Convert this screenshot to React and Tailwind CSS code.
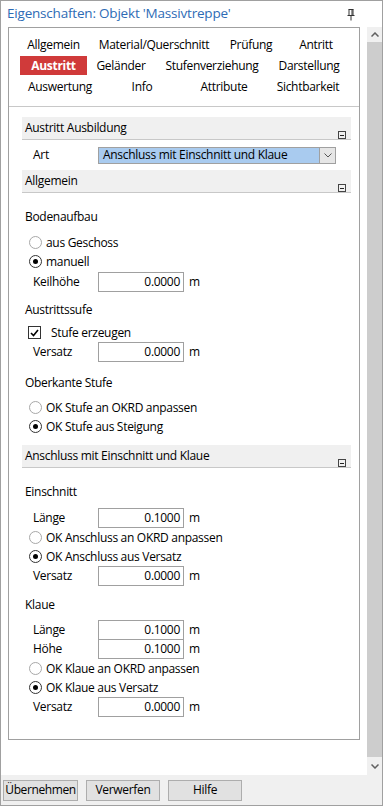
import React from "react";

const font = { fontFamily: '"Open Sans", "Noto Sans", sans-serif' };

function Radio({ checked, label }) {
  return (
    <div className="flex h-[19px] items-center pl-[7px]">
      <span
        className={
          "flex h-[13px] w-[13px] items-center justify-center rounded-full border bg-white " +
          (checked ? "border-[#333333]" : "border-[#a8a8a8]")
        }
      >
        {checked && <span className="h-[5px] w-[5px] rounded-full bg-black" />}
      </span>
      <span className="ml-[4px]">{label}</span>
    </div>
  );
}

function InputRow({ label, value, className = "" }) {
  return (
    <div className={"flex h-[20px] items-center " + className}>
      <span className="w-[76px] pl-[11px]">{label}</span>
      <div className="flex h-[20px] w-[86px] items-center justify-end border border-[#a0a0a0] bg-white pr-[3px]">
        {value}
      </div>
      <span className="ml-[5px]">m</span>
    </div>
  );
}

function Label({ children, className = "" }) {
  return <div className={"flex h-[20px] items-center pl-[3px] " + className}>{children}</div>;
}

function Header({ children, className = "" }) {
  return (
    <div className={"relative h-[23px] border-b border-[#c8c8c8] bg-[#f0f0f0] pl-[3px] " + className}>
      <div className="flex h-[22px] items-center">{children}</div>
      <div className="absolute right-[5px] top-[14px] flex h-[8px] w-[8px] items-center justify-center border border-[#444]">
        <div className="h-[1px] w-[4px] bg-[#222]" />
      </div>
    </div>
  );
}

function Tab({ w, children, active }) {
  return (
    <div className={"flex h-[21px] items-center justify-center " + w}>
      {active ? (
        <div className="flex h-[19px] w-full items-center justify-center bg-[#d03a3a] font-bold text-white">
          {children}
        </div>
      ) : (
        children
      )}
    </div>
  );
}

export default function App() {
  return (
    <div
      className="flex h-[806px] w-[383px] flex-col border border-[#a0a0a0] bg-white text-[12px] leading-none tracking-[-0.3px] text-black"
      style={font}
    >
      {/* title */}
      <div className="relative flex h-[26px] shrink-0 items-center pl-[6px]">
        <span className="text-[13.5px] tracking-[-0.2px] text-[#2e6bb5]">Eigenschaften: Objekt 'Massivtreppe'</span>
        <svg className="absolute right-[27px] top-[8px]" width="8" height="12" viewBox="0 0 8 12">
          <path d="M1.5 0.5h5M2 0.5v6M6 0.5v6M5 0.5v6M0.5 6.5h7M4 6.5v5" stroke="#333" strokeWidth="1" fill="none" />
        </svg>
      </div>

      <div className="flex min-h-0 flex-1">
        {/* content area */}
        <div className="flex-1 pl-[7px] pr-[7px]">
          <div className="h-[713px] border border-[#a0a0a0] bg-white">
            {/* tabs */}
            <div className="border-b border-[#c8c8c8] pb-[9px] pl-[11px] pt-[6px]">
              <div className="flex">
                <Tab w="w-[67px]">Allgemein</Tab>
                <Tab w="w-[134px]">Material/Querschnitt</Tab>
                <Tab w="w-[60px]">Prüfung</Tab>
                <Tab w="w-[70px]">Antritt</Tab>
              </div>
              <div className="flex">
                <Tab w="w-[67px]" active>
                  Austritt
                </Tab>
                <Tab w="w-[68px]">Geländer</Tab>
                <Tab w="w-[114px]">Stufenverziehung</Tab>
                <Tab w="w-[80px]">Darstellung</Tab>
              </div>
              <div className="flex">
                <Tab w="w-[80px]">Auswertung</Tab>
                <Tab w="w-[84px]">Info</Tab>
                <Tab w="w-[80px]">Attribute</Tab>
                <Tab w="w-[88px]">Sichtbarkeit</Tab>
              </div>
            </div>

            <div className="ml-[13px] mr-[8px] mt-[10px]">
              <Header>Austritt Ausbildung</Header>
              <div className="flex h-[30px] items-center">
                <span className="w-[76px] pl-[11px]">Art</span>
                <div className="flex h-[17px] w-[238px] items-center border border-[#a0a0a0] bg-[#a9cbef]">
                  <span className="flex-1 pl-[4px]">Anschluss mit Einschnitt und Klaue</span>
                  <div className="flex h-full w-[16px] items-center justify-center border-l border-[#a0a0a0] bg-[#e6e6e6]">
                    <svg width="8" height="5" viewBox="0 0 8 5">
                      <path d="M0.5 0.5L4 4L7.5 0.5" stroke="#555" strokeWidth="1" fill="none" />
                    </svg>
                  </div>
                </div>
              </div>
              <Header>Allgemein</Header>

              <Label className="mt-[14px]">Bodenaufbau</Label>
              <div className="mt-[6px]">
                <Radio label="aus Geschoss" />
                <Radio checked label="manuell" />
              </div>
              <InputRow label="Keilhöhe" value="0.0000" className="mt-[1px]" />

              <Label className="mt-[8px]">Austrittssufe</Label>
              <div className="mt-[3px] flex h-[19px] items-center pl-[6px]">
                <span className="flex h-[13px] w-[13px] items-center justify-center border border-[#333] bg-white">
                  <svg width="9" height="8" viewBox="0 0 9 8">
                    <path d="M1 4L3.5 6.5L8 1" stroke="#000" strokeWidth="1.6" fill="none" />
                  </svg>
                </span>
                <span className="ml-[10px]">Stufe erzeugen</span>
              </div>
              <InputRow label="Versatz" value="0.0000" />

              <Label className="mt-[11px]">Oberkante Stufe</Label>
              <div className="mt-[5px]">
                <Radio label="OK Stufe an OKRD anpassen" />
                <Radio checked label="OK Stufe aus Steigung" />
              </div>

              <Header className="mt-[9px]">Anschluss mit Einschnitt und Klaue</Header>

              <Label className="mt-[14px]">Einschnitt</Label>
              <InputRow label="Länge" value="0.1000" className="mt-[6px]" />
              <Radio label="OK Anschluss an OKRD anpassen" />
              <Radio checked label="OK Anschluss aus Versatz" />
              <InputRow label="Versatz" value="0.0000" />

              <Label className="mt-[9px]">Klaue</Label>
              <InputRow label="Länge" value="0.1000" className="mt-[5px]" />
              <InputRow label="Höhe" value="0.1000" className="-mt-[1px]" />
              <Radio label="OK Klaue an OKRD anpassen" />
              <Radio checked label="OK Klaue aus Versatz" />
              <InputRow label="Versatz" value="0.0000" />
            </div>
          </div>
        </div>

        {/* scrollbar */}
        <div className="flex w-[15px] shrink-0 flex-col bg-[#f0f0f0]">
          <div className="flex h-[15px] items-center justify-center">
            <svg width="8" height="5" viewBox="0 0 8 5">
              <path d="M0.5 4.5L4 1L7.5 4.5" stroke="#606060" strokeWidth="1.5" fill="none" />
            </svg>
          </div>
          <div className="flex-1 bg-[#cdcdcd]" />
          <div className="flex h-[18px] items-center justify-center">
            <svg width="8" height="5" viewBox="0 0 8 5">
              <path d="M0.5 0.5L4 4L7.5 0.5" stroke="#606060" strokeWidth="1.5" fill="none" />
            </svg>
          </div>
        </div>
      </div>

      {/* bottom bar */}
      <div className="flex h-[30px] shrink-0 items-center gap-[8px] bg-[#f0f0f0] pl-[2px]">
        <button className="h-[21px] w-[75px] border border-[#adadad] bg-[#e1e1e1] text-[12px] tracking-[-0.4px]">Übernehmen</button>
        <button className="h-[21px] w-[74px] border border-[#adadad] bg-[#e1e1e1] text-[12px] tracking-[-0.3px]">Verwerfen</button>
        <button className="h-[21px] w-[74px] border border-[#adadad] bg-[#e1e1e1] text-[12px]">Hilfe</button>
      </div>
    </div>
  );
}
